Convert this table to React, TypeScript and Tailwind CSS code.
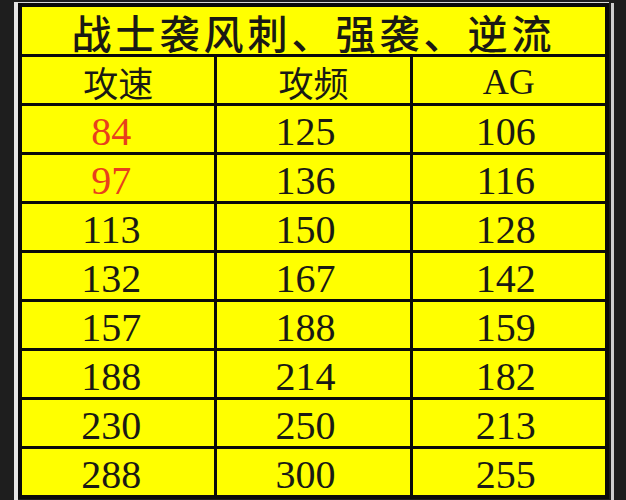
const rows: { a: string; b: string; c: string; red?: boolean }[] = [
  { a: '84', b: '125', c: '106', red: true },
  { a: '97', b: '136', c: '116', red: true },
  { a: '113', b: '150', c: '128' },
  { a: '132', b: '167', c: '142' },
  { a: '157', b: '188', c: '159' },
  { a: '188', b: '214', c: '182' },
  { a: '230', b: '250', c: '213' },
  { a: '288', b: '300', c: '255' },
];

const num = "font-['Liberation_Serif','Noto_Sans_CJK_SC',serif] text-[40px] leading-none";
const cjk = "font-['Noto_Sans_CJK_SC','Noto_Sans',sans-serif]";

function Cell({ children, red, pad }: { children: React.ReactNode; red?: boolean; pad: string }) {
  return (
    <div className={`flex h-[46px] items-center justify-center bg-[#ffff00] pt-[6px] ${pad}`}>
      <span className={`${num} ${red ? 'text-[#e8401c]' : 'text-[#1a1a14]'}`}>{children}</span>
    </div>
  );
}

export default function App() {
  return (
    <div className="flex h-[500px] w-[626px] overflow-hidden bg-[#1e1e1e]">
      <div className="ml-[14px] mt-[2px] flex h-[498px]">
        <div className="w-[4px] bg-[#e6e6e6]" />
        <div className="flex flex-col">
          <div className="h-[1px] bg-[#d8d8d8]" />
          <div className="w-[591px] border-[4px] border-[#0a0a0a] bg-[#0a0a0a]">
            <div className="flex h-[47px] items-center justify-center bg-[#ffff00] pt-[2px]">
              <span className={`${cjk} text-[40px] font-medium leading-[40px] tracking-[4px] text-[#1a1a14]`}>
                战士袭风刺、强袭、逆流
              </span>
            </div>
            <div className="mt-[3px] grid grid-cols-3 gap-[3px]">
              <div className="flex h-[46px] items-center justify-center bg-[#ffff00] pt-[2px]">
                <span className={`${cjk} text-[35px] leading-none text-[#1a1a14]`}>攻速</span>
              </div>
              <div className="flex h-[46px] items-center justify-center bg-[#ffff00] pt-[2px]">
                <span className={`${cjk} text-[35px] leading-none text-[#1a1a14]`}>攻频</span>
              </div>
              <div className="flex h-[46px] items-center justify-center bg-[#ffff00] pt-[4px]">
                <span className="font-['Liberation_Serif',serif] text-[36px] leading-none text-[#1a1a14]">AG</span>
              </div>
              {rows.map((r) => (
                <div key={r.a} className="contents">
                  <Cell red={r.red} pad="pr-[14px]">{r.a}</Cell>
                  <Cell pad="pr-[16px]">{r.b}</Cell>
                  <Cell pad="pr-[6px]">{r.c}</Cell>
                </div>
              ))}
            </div>
          </div>
        </div>
        <div className="w-[2px]" />
        <div className="mt-[1px] w-[3px] bg-[#cfcfcf]" />
      </div>
    </div>
  );
}
